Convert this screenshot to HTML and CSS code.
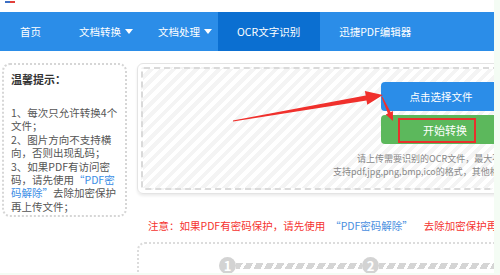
FILE: index.html
```html
<!DOCTYPE html>
<html lang="zh-CN">
<head>
<meta charset="utf-8">
<title>OCR文字识别</title>
<link rel="stylesheet" href="styles.css">
</head>
<body>
<div class="screen">
  <div class="page">
    <div class="topbar"><span class="logo-frag"></span></div>
    <nav class="nav">
      <a class="nav-item first">首页</a>
      <a class="nav-item drop">文档转换<i class="caret"></i></a>
      <a class="nav-item drop">文档处理<i class="caret"></i></a>
      <a class="nav-item active">OCR文字识别</a>
      <a class="nav-item">迅捷PDF编辑器</a>
    </nav>
    <div class="content">
      <aside class="tips">
        <h3 class="tips-title">温馨提示：</h3>
        <p class="tips-text">1、每次只允许转换4个<br>文件；<br>2、图片方向不支持横<br>向，否则出现乱码；<br>3、如果PDF有访问密<br>码，请先使用<span class="link">“PDF密<br>码解除”</span>去除加密保护<br>再上传文件；</p>
      </aside>
      <main class="main">
        <section class="card">
          <div class="dropzone">
            <div class="actions">
              <button class="btn btn-blue">点击选择文件</button>
              <button class="btn btn-green"><span class="mark">开始转换</span></button>
            </div>
            <div class="hint">
              <div class="hint-line indent">请上传需要识别的OCR文件，最大不超过2M</div>
              <div class="hint-line">支持pdf,jpg,png,bmp,ico的格式，其他格式暂不支持</div>
            </div>
          </div>
        </section>
        <p class="note">注意：如果PDF有密码保护，请先使用<span class="note-link">“PDF密码解除”</span>去除加密保护再上传文件；</p>
        <section class="steps">
          <span class="step-num">1</span>
          <span class="step-bar"></span>
          <span class="step-num">2</span>
          <span class="step-bar long"></span>
        </section>
      </main>
    </div>
    <svg class="annot" width="494" height="273" viewBox="0 0 494 273">
      <polygon fill="#f0302c" points="232.9,120.5 365.7,95.4 364.9,91.0 382.9,95.0 367.3,104.8 366.5,100.4 233.1,121.5"/>
      <polygon fill="#f0302c" points="381.5,97.2 387.9,113.4 385.7,114.5 393,121 392.9,111.1 390.7,112.2 382.5,96.8"/>
    </svg>
  </div>
</div>
</body>
</html>
```
FILE: styles.css
```css
* { box-sizing: border-box; }
body {
  margin: 0;
  background: #f4fcf4;
  font-family: "Noto Sans CJK SC", "Microsoft YaHei", sans-serif;
}
.screen { width: 500px; height: 275px; overflow: hidden; }
.page {
  position: relative;
  width: 494px;
  height: 273px;
  background: #fff;
  overflow: hidden;
}
.topbar { height: 12px; padding: 1px 0 0 5px; }
.logo-frag {
  display: block;
  width: 10px;
  height: 2px;
  background: linear-gradient(90deg, #3d6fc4 0 55%, #e2403a 55% 100%);
}
.nav {
  display: flex;
  height: 39px;
  background: #2b8de8;
  color: #fff;
  font-size: 10.5px;
}
.nav-item {
  display: flex;
  align-items: center;
  padding: 0 19px;
  white-space: nowrap;
}
.nav-item.first { padding-left: 20px; }
.nav-item.drop { padding-right: 6px; }
.nav-item.active { background: #0b6fd1; padding: 0 20px 0 19px; }
.caret {
  margin-left: 4px;
  width: 0;
  height: 0;
  border-left: 4.5px solid transparent;
  border-right: 4.5px solid transparent;
  border-top: 5px solid #fff;
}
.content { display: flex; padding-top: 12px; }
.tips {
  flex: none;
  margin-left: 2px;
  width: 125px;
  height: 154px;
  border: 2px dotted #d6d6d6;
  border-radius: 8px;
  padding: 7px 0 0 7px;
  color: #555;
}
.tips-title {
  margin: 0;
  font-size: 11px;
  line-height: 14px;
  font-weight: bold;
  color: #333;
}
.tips-text {
  margin: 20px 0 0;
  font-size: 10.5px;
  line-height: 13.4px;
  white-space: nowrap;
}
.link { color: #3a8ee6; }
.main { flex: none; margin-left: 10px; width: 400px; }
.card {
  border: 1px solid #e4e4e4;
  border-radius: 6px;
  padding: 3px;
  box-shadow: 0 2px 3px rgba(0, 0, 0, 0.08);
}
.dropzone {
  border: 2px dashed #dadada;
  border-radius: 3px;
  background: repeating-linear-gradient(135deg, #fff 0 4px, #f4f4f4 4px 8px);
  padding: 13px 0 10px;
}
.actions {
  margin-left: 238px;
  width: 120px;
  display: flex;
  flex-direction: column;
  gap: 4px;
}
.btn {
  height: 29px;
  border: 0;
  border-radius: 4px;
  color: #fff;
  font-family: inherit;
  font-size: 10.5px;
  display: flex;
  align-items: center;
  justify-content: center;
  padding: 0;
}
.btn-blue { background: #2b8de8; }
.btn-green { background: #5cb85c; align-items: flex-start; justify-content: flex-start; }
.mark {
  display: block;
  margin: 3px 0 0 17px;
  width: 78px;
  height: 25px;
  border: 2px solid #e8302c;
  padding-left: 23px;
  line-height: 21px;
  font-size: 11px;
  text-align: left;
}
.hint {
  margin: 8px 0 0 190px;
  font-size: 9px;
  line-height: 13px;
  color: #888;
  white-space: nowrap;
}
.hint-line.indent { padding-left: 24px; }
.note {
  margin: 25px 0 0 11px;
  font-size: 10.5px;
  line-height: 14px;
  color: #f5332f;
  white-space: nowrap;
}
.note-link { color: #4a8fe0; margin: 0 11px 0 5px; }
.steps {
  margin-top: 9px;
  height: 40px;
  border-top: 2px dotted #dcdcdc;
  border-left: 2px dotted #dcdcdc;
  border-top-left-radius: 8px;
  padding: 13px 0 0 80px;
  display: flex;
  align-items: flex-start;
}
.step-num {
  flex: none;
  width: 17px;
  height: 17px;
  border-radius: 50%;
  background: #d3d3d3;
  color: #fff;
  font-weight: bold;
  font-size: 13px;
  line-height: 17px;
  text-align: center;
}
.step-bar {
  flex: none;
  width: 126px;
  height: 6px;
  margin-top: 5.5px;
  background: repeating-linear-gradient(120deg, #d5d5d5 0 6px, transparent 6px 9px);
}
.step-bar.long { width: 140px; }
.annot {
  position: absolute;
  left: 0;
  top: 0;
  pointer-events: none;
}
```
